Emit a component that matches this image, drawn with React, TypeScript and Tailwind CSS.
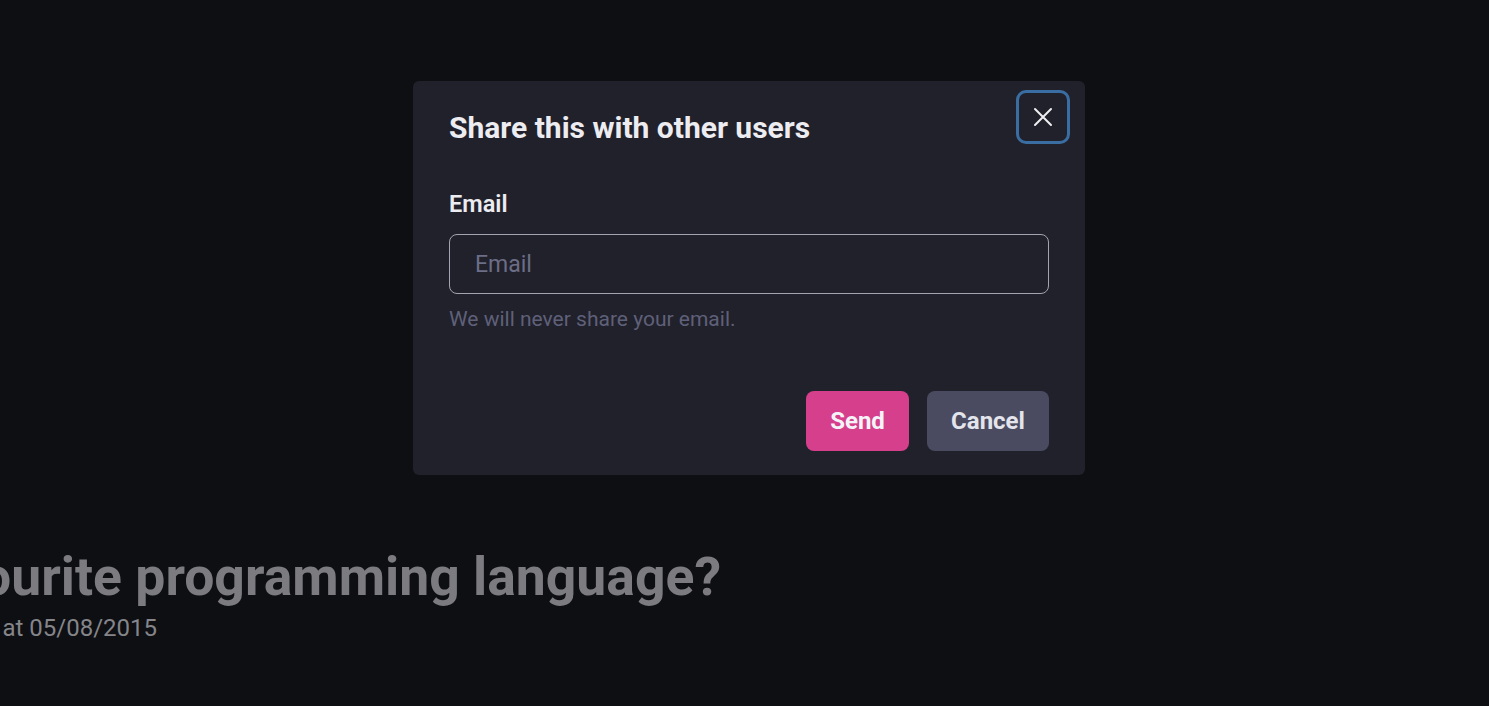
import React from "react";

export default function App() {
  return (
    <div
      className="relative w-full h-[706px] overflow-hidden bg-[#0e0f13]"
      style={{ fontFamily: "Roboto, 'Liberation Sans', sans-serif" }}
    >
      {/* background page content */}
      <div className="absolute left-0 top-[541px] flex flex-col">
        <div className="flex justify-end w-[721px]">
          <h1 className="shrink-0 whitespace-nowrap text-[53.5px] leading-[72px] font-bold text-[#7b7b80]">
            What is your favourite programming language?
          </h1>
        </div>
        <div className="flex justify-end w-[157px]">
          <p className="shrink-0 whitespace-nowrap text-[24px] leading-[30px] text-[#85858a]">
            Asked by admin at 05/08/2015
          </p>
        </div>
      </div>

      {/* modal */}
      <div className="absolute left-[413px] top-[81px] w-[672px] rounded-[6px] bg-[#21212b] px-9 pt-[28px] pb-[24px]">
        <button className="absolute right-[15px] top-[9px] w-[54px] h-[54px] rounded-[10px] border-[3px] border-[#3a6ea3] flex items-center justify-center text-[#eeeef2]">
          <svg width="24" height="24" viewBox="0 0 24 24" fill="none" stroke="currentColor" strokeWidth="2" strokeLinecap="round">
            <path d="M4 4L20 20M20 4L4 20" />
          </svg>
        </button>
        <h2 className="text-[30px] leading-[38px] font-bold text-[#ececf1]">
          Share this with other users
        </h2>
        <label className="block mt-[42px] text-[23.5px] leading-[30px] font-semibold text-[#ececf1]">
          Email
        </label>
        <input
          placeholder="Email"
          className="mt-[15px] w-full h-[60px] rounded-[8px] border border-[#a3a3b1] bg-transparent px-[25px] text-[23px] text-[#ececf1] placeholder:text-[#6c6d86] outline-none"
        />
        <p className="mt-[12px] text-[21px] leading-[26px] text-[#5f6079]">
          We will never share your email.
        </p>
        <div className="mt-[59px] flex justify-end gap-[18px]">
          <button className="h-[60px] w-[103px] rounded-[8px] bg-[#d63f8c] text-[24px] font-bold text-[#f4f4f8]">
            Send
          </button>
          <button className="h-[60px] w-[122px] rounded-[8px] bg-[#4a4b60] text-[24px] font-bold text-[#e4e4ec]">
            Cancel
          </button>
        </div>
      </div>
    </div>
  );
}
